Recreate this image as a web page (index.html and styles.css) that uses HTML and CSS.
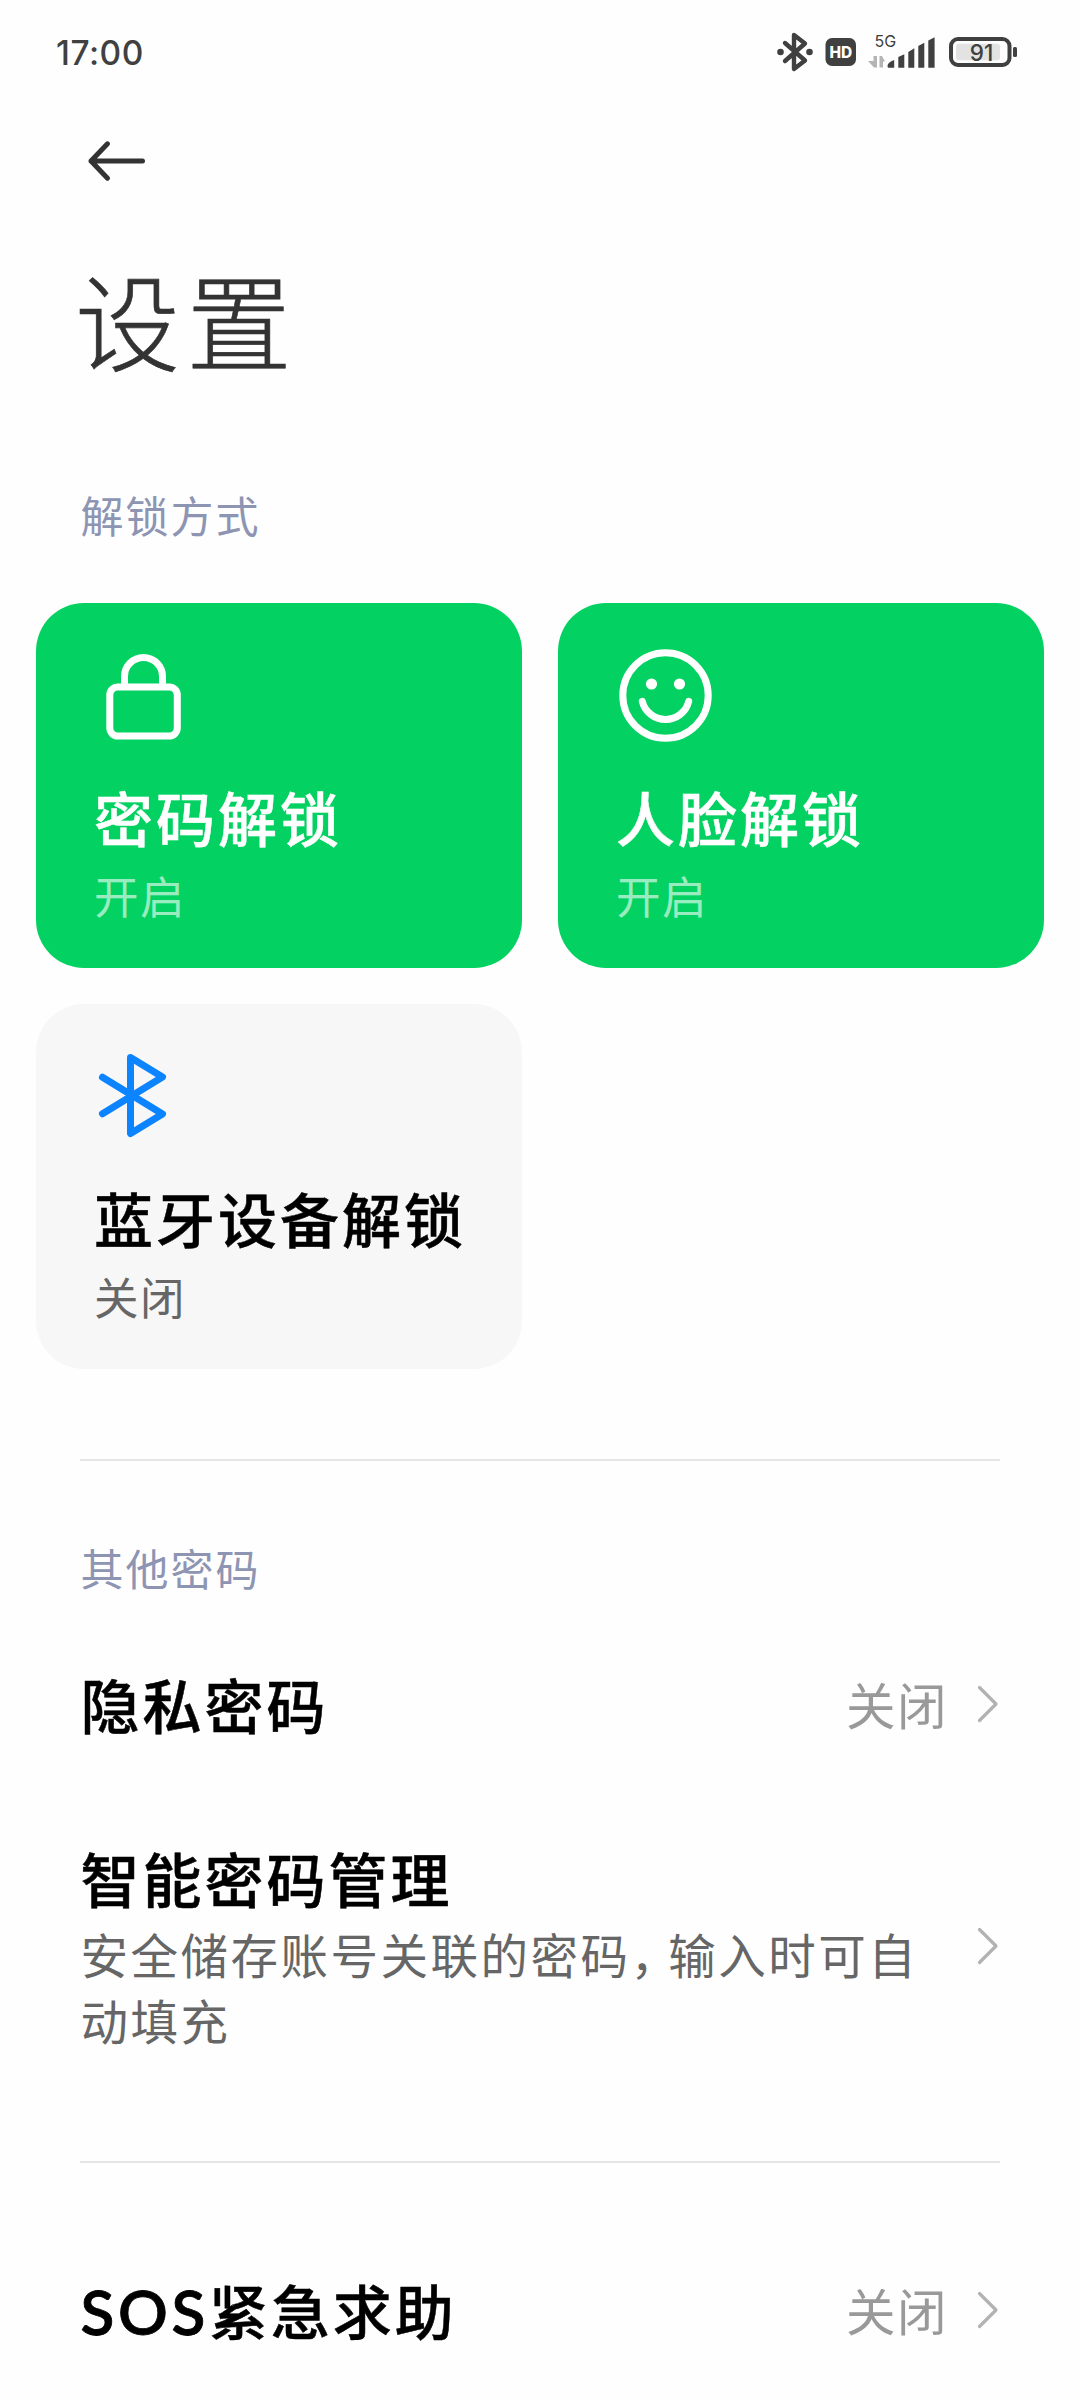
FILE: index.html
```html
<!DOCTYPE html>
<html lang="zh-CN">
<head>
<meta charset="utf-8">
<title>设置</title>
<link rel="stylesheet" href="styles.css">
</head>
<body>
<div class="screen">
  <header class="status">
    <span class="clock">17:00</span>
    <svg class="status-icons" width="250" height="50" viewBox="770 28 250 50">
      <g fill="none" stroke="#404040" stroke-width="4.4" stroke-linecap="round" stroke-linejoin="round">
        <path d="M785 43 L805 60.5 L794 69 V35 L805 43.5 L785 61"/>
      </g>
      <circle cx="780.5" cy="52" r="3.3" fill="#404040"/>
      <circle cx="809.5" cy="52" r="3.3" fill="#404040"/>
      <rect x="825.5" y="38" width="30.5" height="28" rx="6.5" fill="#404040"/>
      <text class="hd" x="840.8" y="58" text-anchor="middle">HD</text>
      <text class="net" x="874.5" y="47">5G</text>
      <path fill="#b4b4b4" d="M873.500 56 h3.500 v11.500 h-3 l-6-6.500 h5.500z M879.500 67.500 v-11.500 h2.500 l3 5.500 h-2 v6z"/>
      <path fill="#404040" d="M887.500 66 q0-3.500 6.700-6 v7.700 h-5.700 q-1 0-1-1.700z M898.300 57 l6-2.800 v13.500 h-6z M908.300 52 l6-3.700 v19.400 h-6z M918.300 46 l6-3.300 v25 h-6z M928.300 40.500 l6.300-3.300 v30.500 h-6.300z"/>
      <rect x="956" y="43.700" width="44" height="16.500" rx="3" fill="#e3e3e3"/>
      <rect x="951" y="39" width="58.500" height="26" rx="7" fill="none" stroke="#404040" stroke-width="4"/>
      <rect x="1013" y="47" width="4" height="10" rx="1.500" fill="#404040"/>
      <text class="level" x="981.5" y="61" text-anchor="middle">91</text>
    </svg>
  </header>

  <nav class="nav">
    <svg width="64" height="48" viewBox="84 136.500 64 48" fill="none" stroke="#333" stroke-width="5" stroke-linecap="round" stroke-linejoin="round">
      <path d="M142.500 160.500 H91 M107.500 143.300 L91 160.500 L107.500 177.700"/>
    </svg>
  </nav>

  <h1 class="title">设置</h1>

  <h2 class="label label-unlock">解锁方式</h2>
  <section class="cards">
    <article class="card card-on">
      <svg class="card-icon" width="96" height="96" viewBox="0 0 96 96" fill="none" stroke="#fff" stroke-width="7">
        <rect x="15.800" y="39" width="67.500" height="49" rx="8"/>
        <path d="M30.500 39 V28.500 a19 19 0 0 1 38 0 V39"/>
      </svg>
      <h3 class="name">密码解锁</h3>
      <p class="state">开启</p>
    </article>
    <article class="card card-on">
      <svg class="card-icon" width="96" height="96" viewBox="0 0 96 96" fill="none" stroke="#fff" stroke-width="7">
        <circle cx="49.500" cy="47.500" r="42.700"/>
        <path d="M26.300 53.300 a23.900 23.900 0 0 0 46.400 0" stroke-linecap="round"/>
        <circle cx="35.500" cy="36" r="5.600" fill="#fff" stroke="none"/>
        <circle cx="63.500" cy="36" r="5.600" fill="#fff" stroke="none"/>
      </svg>
      <h3 class="name">人脸解锁</h3>
      <p class="state">开启</p>
    </article>
    <article class="card">
      <svg class="card-icon" width="96" height="96" viewBox="0 0 96 96" fill="none" stroke="#0d84ff" stroke-width="7" stroke-linecap="round" stroke-linejoin="round">
        <path d="M8.500 28.300 L68.500 65 L36.500 84.500 V8.500 L68.500 28 L8.500 64.700"/>
      </svg>
      <h3 class="name">蓝牙设备解锁</h3>
      <p class="state">关闭</p>
    </article>
  </section>

  <hr class="rule rule-first">

  <h2 class="label label-other">其他密码</h2>
  <div class="row">
    <h3 class="name">隐私密码</h3>
    <span class="value">关闭</span>
    <svg class="chevron" width="24" height="40" viewBox="0 0 24 40"><path d="M3.500 3.500 L20 20 L3.500 36.500"/></svg>
  </div>
  <div class="row row-tall">
    <div class="info">
      <h3 class="name">智能密码管理</h3>
      <p class="desc">安全储存账号关联的密码<span class="comma">，</span>输入时可自动填充</p>
    </div>
    <svg class="chevron" width="24" height="40" viewBox="0 0 24 40"><path d="M3.500 3.500 L20 20 L3.500 36.500"/></svg>
  </div>

  <hr class="rule rule-second">

  <div class="row">
    <h3 class="name"><span class="latin">SOS</span>紧急求助</h3>
    <span class="value">关闭</span>
    <svg class="chevron" width="24" height="40" viewBox="0 0 24 40"><path d="M3.500 3.500 L20 20 L3.500 36.500"/></svg>
  </div>
</div>
</body>
</html>
```
FILE: styles.css
```css
* {
  box-sizing: border-box;
  margin: 0;
  padding: 0;
}

body {
  background: #fefefe;
  font-family: "Noto Sans CJK SC", sans-serif;
  color: #000;
}

.screen {
  width: 1080px;
  height: 2400px;
  overflow: hidden;
  display: flex;
  flex-direction: column;
}

svg {
  display: block;
  flex: none;
}

/* Status bar */
.status {
  height: 106px;
  padding: 28px 60px 28px 56px;
  display: flex;
  justify-content: space-between;
  align-items: center;
}

.clock {
  font: 500 33.5px/50px Inter, sans-serif;
  letter-spacing: 0.5px;
  color: #404040;
}

.status-icons text {
  font-family: Inter, sans-serif;
  fill: #404040;
}

.status-icons .hd {
  font-size: 15.5px;
  font-weight: 800;
  fill: #fff;
}

.status-icons .net {
  font-size: 16px;
  font-weight: 400;
}

.status-icons .level {
  font-size: 22.5px;
  font-weight: 500;
}

.nav {
  height: 150px;
  padding: 30.5px 84px 0;
}

.title {
  padding-left: 75px;
  font-size: 105px;
  line-height: 122px;
  font-weight: 300;
  letter-spacing: 6.5px;
  color: #333;
  -webkit-text-stroke: 0.6px #333;
}

.label {
  padding-left: 80.5px;
  font-size: 43px;
  line-height: 60px;
  font-weight: 400;
  letter-spacing: 2px;
  color: #8d95b3;
}

.label-unlock {
  margin: 106px 0 59px;
}

.label-other {
  margin: 76px 0 37px;
}

/* Unlock method cards */
.cards {
  padding: 0 36px;
  display: grid;
  grid-template-columns: 1fr 1fr;
  gap: 36px;
}

.card {
  height: 365px;
  padding: 45px 0 0 58px;
  border-radius: 48px;
  background: #f7f7f7;
}

.card-on {
  background: #03d262;
  color: #fff;
}

.card-icon {
  margin-bottom: 33px;
}

.name {
  font-size: 59px;
  line-height: 80px;
  font-weight: 500;
  letter-spacing: 3px;
  white-space: nowrap;
  -webkit-text-stroke: 0.5px currentColor;
}

.state {
  margin-top: 8px;
  font-size: 44.5px;
  line-height: 60px;
  letter-spacing: 1.5px;
  color: #666;
}

.card-on .state {
  color: rgba(255, 255, 255, 0.6);
}

.rule {
  flex: none;
  height: 2px;
  margin: 0 80px;
  border: 0;
  background: #e5e5e5;
}

.rule-first {
  margin-top: 90px;
}

.rule-second {
  margin-top: 44px;
  margin-bottom: 77px;
}

/* Settings rows */
.row {
  height: 140px;
  padding: 0 80px 0 80.5px;
  display: flex;
  align-items: center;
}

.row .name {
  margin-top: -1px;
}

.row-tall {
  height: 343px;
  justify-content: space-between;
}

.info {
  width: 860px;
}

.row .info .name {
  margin-top: 0;
}

.desc {
  margin-top: 3px;
  font-size: 47.5px;
  line-height: 66px;
  letter-spacing: 2.5px;
  color: #666;
}

.comma {
  font-feature-settings: "halt";
  letter-spacing: 14px;
}

.value {
  margin-top: -1px;
  margin-left: auto;
  margin-right: 28px;
  font-size: 49.5px;
  line-height: 66px;
  letter-spacing: 1.5px;
  color: #999;
}

.chevron {
  fill: none;
  stroke: #b2b2b2;
  stroke-width: 3.2;
  stroke-linecap: round;
  stroke-linejoin: round;
}

.latin {
  font-family: Lato, sans-serif;
  font-size: 62px;
  font-weight: 600;
  line-height: 1;
  letter-spacing: 3.6px;
  -webkit-text-stroke: 0.8px currentColor;
}
```
